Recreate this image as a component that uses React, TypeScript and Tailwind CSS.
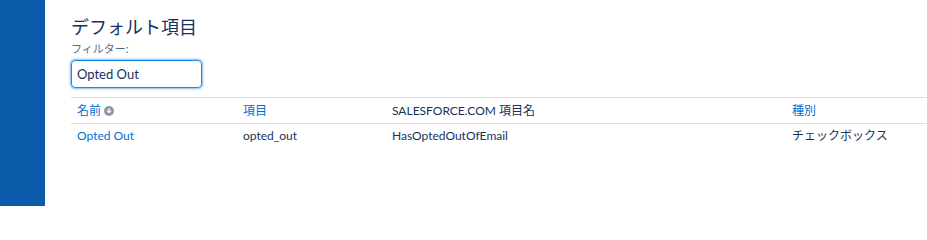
import React from 'react';

const rows = [
  { name: 'Opted Out', field: 'opted_out', api: 'HasOptedOutOfEmail', type: 'チェックボックス' },
];

const font = { fontFamily: 'Lato, "Noto Sans CJK JP", sans-serif' };

export default function App() {
  return (
    <div className="flex h-[206px] w-[927px] bg-white" style={font}>
      <div className="w-[45px] shrink-0 bg-[#0b5cab]" />
      <div className="flex-1 pt-[14px] pl-[26px]">
        <h1 className="text-[18px] leading-[26px] text-[#16325c]">デフォルト項目</h1>
        <label className="mt-[2px] block text-[11px] leading-[14px] text-[#54698d]">フィルター:</label>
        <input
          defaultValue="Opted Out"
          className="mt-[4px] h-[28px] w-[131px] rounded-[4px] border border-[#1589ee] px-[5px] text-[13px] text-[#16325c] shadow-[0_0_3px_#0070d2] outline-none"
        />
        <div className="mt-[9px] border-t border-[#d8dde6]">
          <div className="grid grid-cols-[166px_149px_400px_1fr] border-b border-[#d8dde6] py-[5px] pl-[6px] text-[12px] leading-[15px]">
            <div className="flex items-center gap-[3px] text-[#0070d2]">
              名前
              <svg width="10" height="10" viewBox="0 0 10 10">
                <circle cx="5" cy="5" r="5" fill="#8f97a3" />
                <path d="M5 2.2v4.3M3 4.6l2 2 2-2" stroke="#fff" strokeWidth="1.3" fill="none" />
              </svg>
            </div>
            <div className="text-[#0070d2]">項目</div>
            <div className="text-[#16325c]">SALESFORCE.COM 項目名</div>
            <div className="text-[#0070d2]">種別</div>
          </div>
          {rows.map((r) => (
            <div key={r.name} className="grid grid-cols-[166px_149px_400px_1fr] pt-[4px] pb-[6px] pl-[6px] text-[12px] leading-[15px] text-[#16325c]">
              <div className="text-[#0070d2]">{r.name}</div>
              <div>{r.field}</div>
              <div>{r.api}</div>
              <div>{r.type}</div>
            </div>
          ))}
        </div>
      </div>
    </div>
  );
}
